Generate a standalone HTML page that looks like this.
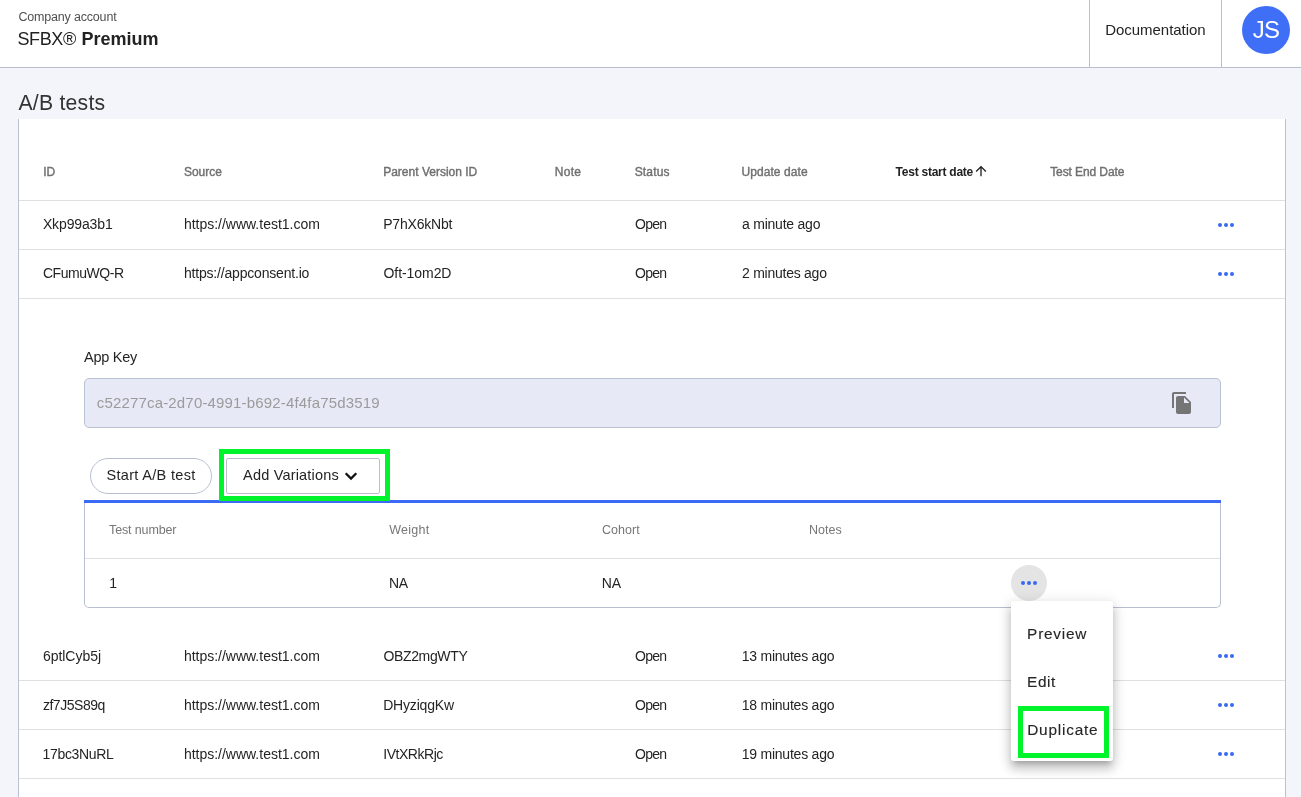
<!DOCTYPE html><html lang="en"><head><meta charset="utf-8"><title>A/B tests</title><style>

*{box-sizing:border-box;margin:0;padding:0}
html,body{width:1301px;height:797px;overflow:hidden}
body{background:#f3f5fb;font-family:"Liberation Sans",sans-serif;color:#222;position:relative}
#app{position:absolute;left:0;top:0;width:1301px;height:797px;overflow:hidden;will-change:transform}
.t{position:absolute;white-space:nowrap;display:block}
.mu,.td{color:#242424}
.light{color:#505050}
.ro{color:#222}
.bold{font-weight:700}
.white{color:#fff}
.h1{color:#333}
.th{color:#707070;font-weight:400;-webkit-text-stroke:0.4px #707070}
.th.act{color:#222;font-weight:700;-webkit-text-stroke:0}
.grey{color:#9b9b9b}
.sub{color:#777}
.mi{color:#262626;-webkit-text-stroke:0.12px #262626}
header{position:absolute;left:0;top:0;width:1301px;height:68px;background:#fff;border-bottom:1px solid #b9bdcd}
.vdiv{position:absolute;top:0;width:1px;height:67px;background:#b9bdcd}
.avatar{position:absolute;left:1242px;top:6px;width:48px;height:48px;border-radius:50%;background:#3f6ff6}
.card{position:absolute;left:18px;top:119px;width:1268px;height:700px;background:#fff;border-left:1px solid #bbc1d0;border-right:1px solid #bbc1d0}
.hr{position:absolute;left:19px;width:1266px;height:1px;background:#e0e0e0}
.dots{position:absolute;fill:#3968f5}
.input{position:absolute;left:84px;top:378px;width:1137px;height:50px;border:1px solid #bac1d0;border-radius:5px;background:#e7eaf6}
.pill{position:absolute;left:90px;top:458px;width:122px;height:36px;border:1px solid #b8bfcf;border-radius:18px;background:#fff}
.btn{position:absolute;left:226px;top:458px;width:154px;height:36px;border:1px solid #b8bfcf;border-radius:2px;background:#fff}
.hl{position:absolute;border:5px solid #00f42c}
.sub-table{position:absolute;left:84px;top:503px;width:1137px;height:105px;border:1px solid #b8bfcf;border-top:0;border-radius:0 0 5px 5px;background:#fff}
.bluebar{position:absolute;left:84px;top:500px;width:1137px;height:3px;background:#3b6af6}
.sub-hr{position:absolute;left:85px;top:558px;width:1135px;height:1px;background:#e0e0e0}
.circle{position:absolute;left:1011px;top:565px;width:36px;height:36px;border-radius:50%;background:#e4e4e4}
.menu{position:absolute;left:1011px;top:601px;width:102px;height:160px;background:#fff;border-radius:3px;box-shadow:0 5px 5px -3px rgba(0,0,0,.2),0 8px 10px 1px rgba(0,0,0,.14),0 3px 14px 2px rgba(0,0,0,.12)}
svg.ic{position:absolute}

</style></head><body><div id="app">
<header></header><div class="vdiv" style="left:1089px"></div><div class="vdiv" style="left:1221px"></div><div class="avatar"></div>
<main class="card"></main>
<div class="hr" style="top:200px"></div>
<div class="hr" style="top:249px"></div>
<div class="hr" style="top:298px"></div>
<div class="hr" style="top:680px"></div>
<div class="hr" style="top:729px"></div>
<div class="hr" style="top:778px"></div>
<svg class="dots" style="left:1218.25px;top:223px" width="16" height="4" viewBox="0 0 16 4"><circle cx="2" cy="2" r="2"/><circle cx="8" cy="2" r="2"/><circle cx="14" cy="2" r="2"/></svg>
<svg class="dots" style="left:1218.25px;top:272px" width="16" height="4" viewBox="0 0 16 4"><circle cx="2" cy="2" r="2"/><circle cx="8" cy="2" r="2"/><circle cx="14" cy="2" r="2"/></svg>
<svg class="dots" style="left:1218.25px;top:654px" width="16" height="4" viewBox="0 0 16 4"><circle cx="2" cy="2" r="2"/><circle cx="8" cy="2" r="2"/><circle cx="14" cy="2" r="2"/></svg>
<svg class="dots" style="left:1218.25px;top:703px" width="16" height="4" viewBox="0 0 16 4"><circle cx="2" cy="2" r="2"/><circle cx="8" cy="2" r="2"/><circle cx="14" cy="2" r="2"/></svg>
<svg class="dots" style="left:1218.25px;top:752px" width="16" height="4" viewBox="0 0 16 4"><circle cx="2" cy="2" r="2"/><circle cx="8" cy="2" r="2"/><circle cx="14" cy="2" r="2"/></svg>
<svg class="ic" style="left:973.4px;top:163.2px" width="16" height="16" viewBox="0 0 24 24"><path fill="#222" d="M4 12l1.41 1.41L11 7.83V20h2V7.830l5.58 5.590L20 12l-8-8-8 8z"/></svg>
<div class="input"></div>
<svg class="ic" style="left:1169.5px;top:390.9px" width="24" height="24" viewBox="0 0 24 24"><path fill="#757575" d="M16 1H4c-1.1 0-2 .9-2 2v14h2V3h12V1zm-1 4l6 6v10c0 1.1-.9 2-2 2H7.990C6.890 23 6 22.100 6 21l.010-14c0-1.100.890-2 1.990-2h7zm-1 7h5.500L14 6.500V12z"/></svg>
<div class="pill"></div><div class="btn"></div>
<svg class="ic" style="left:344px;top:471px" width="14" height="11" viewBox="0 0 14 11"><path d="M1.700 2.300L7 7.600L12.300 2.300" fill="none" stroke="#111" stroke-width="2.300"/></svg>
<div class="sub-table"></div><div class="bluebar"></div><div class="sub-hr"></div>
<div class="hl" style="left:219px;top:449px;width:171px;height:52px"></div>
<div class="circle"></div>
<svg class="dots" id="opendots" style="left:1020.85px;top:581px" width="16" height="4" viewBox="0 0 16 4"><circle cx="2" cy="2" r="2"/><circle cx="8" cy="2" r="2"/><circle cx="14" cy="2" r="2"/></svg>
<div class="menu"></div>
<div class="hl" style="left:1018px;top:706px;width:91px;height:52px"></div>
<span class="t mu light" id="t0" style="left:18.40px;top:9.90px;font-size:12.5px;line-height:14px;letter-spacing:-0.179px;">Company account</span>
<span class="t ro" id="t1" style="left:17.40px;top:28.90px;font-size:18px;line-height:20px;letter-spacing:-0.375px;">SFBX®</span>
<span class="t ro bold" id="t2" style="left:81.40px;top:28.90px;font-size:18px;line-height:20px;letter-spacing:0.000px;">Premium</span>
<span class="t mu" id="t3" style="left:1105.30px;top:20.70px;font-size:15px;line-height:17px;letter-spacing:-0.050px;">Documentation</span>
<span class="t ro white" id="t4" style="left:1252.80px;top:16.00px;font-size:24px;line-height:27px;letter-spacing:-0.800px;">JS</span>
<span class="t ro h1" id="t5" style="left:18.40px;top:91.10px;font-size:21.2px;line-height:23px;letter-spacing:0.250px;">A/B tests</span>
<span class="t th" id="t6" style="left:43.20px;top:165.00px;font-size:12px;line-height:14px;letter-spacing:0.000px;">ID</span>
<span class="t th" id="t7" style="left:183.95px;top:165.00px;font-size:12px;line-height:14px;letter-spacing:0.000px;">Source</span>
<span class="t th" id="t8" style="left:383.20px;top:165.00px;font-size:12px;line-height:14px;letter-spacing:0.000px;">Parent Version ID</span>
<span class="t th" id="t9" style="left:554.70px;top:165.00px;font-size:12px;line-height:14px;letter-spacing:0.333px;">Note</span>
<span class="t th" id="t10" style="left:634.70px;top:165.00px;font-size:12px;line-height:14px;letter-spacing:0.150px;">Status</span>
<span class="t th" id="t11" style="left:741.45px;top:165.00px;font-size:12px;line-height:14px;letter-spacing:0.075px;">Update date</span>
<span class="t th act bold" id="t12" style="left:895.60px;top:165.00px;font-size:12px;line-height:14px;letter-spacing:-0.250px;">Test start date</span>
<span class="t th" id="t13" style="left:1050.20px;top:165.00px;font-size:12px;line-height:14px;letter-spacing:-0.100px;">Test End Date</span>
<span class="t td" id="t14" style="left:42.90px;top:215.60px;font-size:14px;line-height:16px;letter-spacing:-0.125px;">Xkp99a3b1</span>
<span class="t td" id="t15" style="left:183.95px;top:215.60px;font-size:14px;line-height:16px;letter-spacing:-0.013px;">https://www.test1.com</span>
<span class="t td" id="t16" style="left:383.20px;top:215.60px;font-size:14px;line-height:16px;letter-spacing:-0.188px;">P7hX6kNbt</span>
<span class="t td" id="t17" style="left:635.00px;top:215.60px;font-size:14px;line-height:16px;letter-spacing:-0.750px;">Open</span>
<span class="t td" id="t18" style="left:742.00px;top:215.60px;font-size:14px;line-height:16px;letter-spacing:-0.227px;">a minute ago</span>
<span class="t td" id="t19" style="left:42.90px;top:264.60px;font-size:14px;line-height:16px;letter-spacing:-0.438px;">CFumuWQ-R</span>
<span class="t td" id="t20" style="left:183.95px;top:264.60px;font-size:14px;line-height:16px;letter-spacing:-0.188px;">https://appconsent.io</span>
<span class="t td" id="t21" style="left:383.50px;top:264.60px;font-size:14px;line-height:16px;letter-spacing:-0.062px;">Oft-1om2D</span>
<span class="t td" id="t22" style="left:635.00px;top:264.60px;font-size:14px;line-height:16px;letter-spacing:-0.750px;">Open</span>
<span class="t td" id="t23" style="left:742.00px;top:264.60px;font-size:14px;line-height:16px;letter-spacing:-0.250px;">2 minutes ago</span>
<span class="t td" id="t24" style="left:42.90px;top:647.80px;font-size:14px;line-height:16px;letter-spacing:-0.025px;">6ptlCyb5j</span>
<span class="t td" id="t25" style="left:183.95px;top:647.80px;font-size:14px;line-height:16px;letter-spacing:-0.013px;">https://www.test1.com</span>
<span class="t td" id="t26" style="left:383.50px;top:647.80px;font-size:14px;line-height:16px;letter-spacing:-0.363px;">OBZ2mgWTY</span>
<span class="t td" id="t27" style="left:635.00px;top:647.80px;font-size:14px;line-height:16px;letter-spacing:-0.750px;">Open</span>
<span class="t td" id="t28" style="left:741.70px;top:647.80px;font-size:14px;line-height:16px;letter-spacing:-0.223px;">13 minutes ago</span>
<span class="t td" id="t29" style="left:42.90px;top:696.80px;font-size:14px;line-height:16px;letter-spacing:-0.463px;">zf7J5S89q</span>
<span class="t td" id="t30" style="left:183.95px;top:696.80px;font-size:14px;line-height:16px;letter-spacing:-0.013px;">https://www.test1.com</span>
<span class="t td" id="t31" style="left:383.20px;top:696.80px;font-size:14px;line-height:16px;letter-spacing:-0.188px;">DHyziqgKw</span>
<span class="t td" id="t32" style="left:635.00px;top:696.80px;font-size:14px;line-height:16px;letter-spacing:-0.750px;">Open</span>
<span class="t td" id="t33" style="left:741.70px;top:696.80px;font-size:14px;line-height:16px;letter-spacing:-0.223px;">18 minutes ago</span>
<span class="t td" id="t34" style="left:42.60px;top:745.80px;font-size:14px;line-height:16px;letter-spacing:-0.338px;">17bc3NuRL</span>
<span class="t td" id="t35" style="left:183.95px;top:745.80px;font-size:14px;line-height:16px;letter-spacing:-0.013px;">https://www.test1.com</span>
<span class="t td" id="t36" style="left:383.20px;top:745.80px;font-size:14px;line-height:16px;letter-spacing:-0.450px;">IVtXRkRjc</span>
<span class="t td" id="t37" style="left:635.00px;top:745.80px;font-size:14px;line-height:16px;letter-spacing:-0.750px;">Open</span>
<span class="t td" id="t38" style="left:741.70px;top:745.80px;font-size:14px;line-height:16px;letter-spacing:-0.223px;">19 minutes ago</span>
<span class="t mu" id="t39" style="left:84.00px;top:349.00px;font-size:14.5px;line-height:16px;letter-spacing:-0.250px;">App Key</span>
<span class="t mu grey" id="t40" style="left:96.75px;top:394.00px;font-size:15px;line-height:17px;letter-spacing:0.171px;">c52277ca-2d70-4991-b692-4f4fa75d3519</span>
<span class="t mu" id="t41" style="left:106.45px;top:467.40px;font-size:14.5px;line-height:16px;letter-spacing:0.327px;">Start A/B test</span>
<span class="t mu" id="t42" style="left:243.10px;top:467.30px;font-size:14.5px;line-height:16px;letter-spacing:0.177px;">Add Variations</span>
<span class="t mu sub" id="t43" style="left:109.00px;top:522.60px;font-size:12.5px;line-height:14px;letter-spacing:-0.125px;">Test number</span>
<span class="t mu sub" id="t44" style="left:389.20px;top:522.60px;font-size:12.5px;line-height:14px;letter-spacing:0.280px;">Weight</span>
<span class="t mu sub" id="t45" style="left:602.10px;top:522.60px;font-size:12.5px;line-height:14px;letter-spacing:0.000px;">Cohort</span>
<span class="t mu sub" id="t46" style="left:809.00px;top:522.60px;font-size:12.5px;line-height:14px;letter-spacing:0.000px;">Notes</span>
<span class="t td" id="t47" style="left:109.20px;top:575.00px;font-size:14px;line-height:16px;letter-spacing:0.000px;">1</span>
<span class="t td" id="t48" style="left:388.90px;top:575.00px;font-size:14px;line-height:16px;letter-spacing:-0.200px;">NA</span>
<span class="t td" id="t49" style="left:601.80px;top:575.00px;font-size:14px;line-height:16px;letter-spacing:-0.100px;">NA</span>
<span class="t mu mi" id="t50" style="left:1027.10px;top:624.70px;font-size:15.4px;line-height:17px;letter-spacing:0.767px;">Preview</span>
<span class="t mu mi" id="t51" style="left:1027.10px;top:672.70px;font-size:15.4px;line-height:17px;letter-spacing:0.533px;">Edit</span>
<span class="t mu mi" id="t52" style="left:1027.20px;top:720.60px;font-size:15.4px;line-height:17px;letter-spacing:0.787px;">Duplicate</span>
</div></body></html>
